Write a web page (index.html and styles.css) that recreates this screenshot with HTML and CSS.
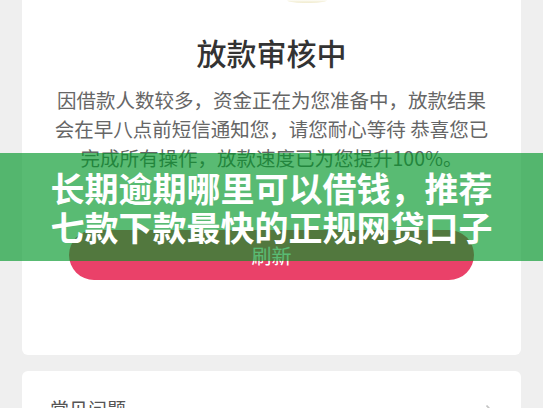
FILE: index.html
```html
<!DOCTYPE html>
<html lang="zh-CN">
<head>
    <meta charset="UTF-8">
    <meta name="viewport" content="width=device-width, initial-scale=1.0">
    <title>放款审核中</title>
    <link rel="stylesheet" href="styles.css">
</head>
<body>

    <div class="page">
        <!-- Status card -->
        <div class="card status">
            <div class="status-icon"></div>
            <h2 class="status-title">放款审核中</h2>
            <p class="status-text">因借款人数较多，资金正在为您准备中，放款结果会在早八点前短信通知您，请您耐心等待 恭喜您已完成所有操作，放款速度已为您提升100%。</p>
            <button class="refresh">刷新</button>
        </div>

        <!-- FAQ entry -->
        <div class="card faq">
            <span class="faq-label">常见问题</span>
            <svg class="faq-arrow" width="10" height="18" viewBox="0 0 10 18">
                <polyline points="1.5,1.5 8.5,9 1.5,16.5" fill="none" stroke="#c4c4c4" stroke-width="1.8"/>
            </svg>
        </div>
    </div>

    <!-- Article banner over the screenshot -->
    <div class="banner">
        <p>长期逾期哪里可以借钱，推荐<br>七款下款最快的正规网贷口子</p>
    </div>

</body>
</html>
```

FILE: styles.css
```css
body, html {
    margin: 0;
    padding: 0;
    background-color: #efefef;
    font-family: "Noto Sans CJK SC", "Noto Sans", sans-serif;
    overflow: hidden;
}
.page {
    padding: 0 22px;
}
.card {
    background-color: #fff;
    border-radius: 6px;
}
/* Status card, scrolled past its top */
.status {
    margin-top: -40px;
    padding: 0 0 75px;
    text-align: center;
}
.status-icon {
    width: 40px;
    height: 43px;
    margin-left: 265px;
    border-radius: 0 0 16px 16px / 0 0 3px 3px;
    background: linear-gradient(to bottom, #fff 0, #fff 40px, #f7f4e2 41px, #f1ecd0 43px);
}
.status-title {
    margin: 29px 0 0;
    font-size: 30px;
    line-height: 40px;
    font-weight: 500;
    color: #333;
}
.status-text {
    max-width: 442px;
    margin: 14px auto 0;
    font-size: 19.5px;
    line-height: 28.75px;
    color: #666;
}
.refresh {
    display: block;
    width: 405px;
    height: 50px;
    margin: 58px auto 0;
    border: none;
    border-radius: 25px;
    background-color: #ea4169;
    color: #fff;
    font-family: inherit;
    font-size: 20px;
    cursor: pointer;
}
/* FAQ row */
.faq {
    margin-top: 16px;
    padding: 25px 26px 30px 28px;
    display: flex;
    align-items: center;
    justify-content: space-between;
}
.faq-label {
    font-size: 19px;
    line-height: 26px;
    color: #555;
}
.faq-arrow {
    margin-top: 8px;
}
/* Green banner */
.banner {
    position: absolute;
    top: 153px;
    left: 0;
    width: 100%;
    height: 108px;
    display: flex;
    align-items: center;
    justify-content: center;
    background-color: rgba(0, 150, 40, 0.65);
}
.banner p {
    margin: 0;
    text-align: center;
    font-size: 34px;
    line-height: 39.5px;
    font-weight: 700;
    color: #fff;
}
```
